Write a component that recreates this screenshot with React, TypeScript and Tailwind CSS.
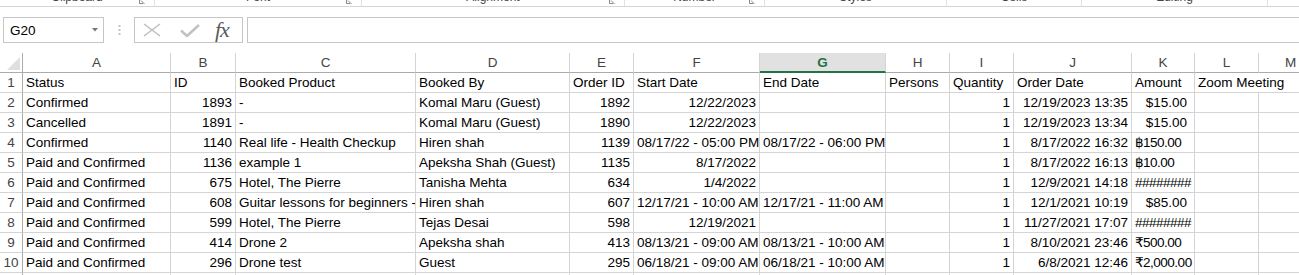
import React from "react";

type Cell = { t?: string; r?: boolean; pr?: boolean; tight?: boolean };

const COLS =
  "grid grid-cols-[23px_148px_65px_180px_154px_64px_126px_126px_64px_64px_118px_63px_64px_64px]";

const letters = ["A", "B", "C", "D", "E", "F", "G", "H", "I", "J", "K", "L", "M"];

const header = [
  "Status",
  "ID",
  "Booked Product",
  "Booked By",
  "Order ID",
  "Start Date",
  "End Date",
  "Persons",
  "Quantity",
  "Order Date",
  "Amount",
];

const L = (t: string): Cell => ({ t });
const R = (t: string): Cell => ({ t, r: true });
const E: Cell = {};
const usd = (t: string): Cell => ({ t, r: true, pr: true });
const cur = (t: string): Cell => ({ t, tight: true });
const HASH: Cell = { t: "########", tight: true };

const rows: Cell[][] = [
  [L("Confirmed"), R("1893"), L("-"), L("Komal Maru (Guest)"), R("1892"), R("12/22/2023"), E, E, R("1"), R("12/19/2023 13:35"), usd("$15.00"), E, E],
  [L("Cancelled"), R("1891"), L("-"), L("Komal Maru (Guest)"), R("1890"), R("12/22/2023"), E, E, R("1"), R("12/19/2023 13:34"), usd("$15.00"), E, E],
  [L("Confirmed"), R("1140"), L("Real life - Health Checkup"), L("Hiren shah"), R("1139"), L("08/17/22 - 05:00 PM"), L("08/17/22 - 06:00 PM"), E, R("1"), R("8/17/2022 16:32"), cur("฿150.00"), E, E],
  [L("Paid and Confirmed"), R("1136"), L("example 1"), L("Apeksha Shah (Guest)"), R("1135"), R("8/17/2022"), E, E, R("1"), R("8/17/2022 16:13"), cur("฿10.00"), E, E],
  [L("Paid and Confirmed"), R("675"), L("Hotel, The Pierre"), L("Tanisha Mehta"), R("634"), R("1/4/2022"), E, E, R("1"), R("12/9/2021 14:18"), HASH, E, E],
  [L("Paid and Confirmed"), R("608"), L("Guitar lessons for beginners -"), L("Hiren shah"), R("607"), L("12/17/21 - 10:00 AM"), L("12/17/21 - 11:00 AM"), E, R("1"), R("12/1/2021 10:19"), usd("$85.00"), E, E],
  [L("Paid and Confirmed"), R("599"), L("Hotel, The Pierre"), L("Tejas Desai"), R("598"), R("12/19/2021"), E, E, R("1"), R("11/27/2021 17:07"), HASH, E, E],
  [L("Paid and Confirmed"), R("414"), L("Drone 2"), L("Apeksha shah"), R("413"), L("08/13/21 - 09:00 AM"), L("08/13/21 - 10:00 AM"), E, R("1"), R("8/10/2021 23:46"), cur("₹500.00"), E, E],
  [L("Paid and Confirmed"), R("296"), L("Drone test"), L("Guest"), R("295"), L("06/18/21 - 09:00 AM"), L("06/18/21 - 10:00 AM"), E, R("1"), R("6/8/2021 12:46"), cur("₹2,000.00"), E, E],
  [E, E, E, E, E, E, E, E, E, E, E, E, E],
];

const groups = [
  { name: "Clipboard", w: "w-[155px]", launcher: true },
  { name: "Font", w: "w-[207px]", launcher: true },
  { name: "Alignment", w: "w-[263px]", launcher: true },
  { name: "Number", w: "w-[140px]", launcher: true },
  { name: "Styles", w: "w-[182px]", launcher: false },
  { name: "Cells", w: "w-[135px]", launcher: false },
  { name: "Editing", w: "w-[186px]", launcher: false },
];

function Launcher() {
  return (
    <svg width="7" height="6" viewBox="0 0 7 6" className="shrink-0">
      <path d="M0.5 0 V3.5 H4" stroke="#8a8a8a" fill="none" />
      <path d="M2 0.5 L5.5 4" stroke="#8a8a8a" fill="none" />
    </svg>
  );
}

function RibbonStrip() {
  return (
    <div className="flex h-[7px] border-b border-[#d5d5d5] overflow-hidden">
      {groups.map((g) => (
        <div
          key={g.name}
          className={`${g.w} shrink-0 flex border-r border-[#e1e1e1] h-[6px]`}
        >
          <div
            className={`flex-1 flex justify-center ${g.launcher ? "pl-[20px]" : ""}`}
          >
            <span className="mt-[-9px] text-[12px] leading-[12px] text-[#444]">
              {g.name}
            </span>
          </div>
          {g.launcher && (
            <div className="w-[20px] flex justify-end pr-[8px] items-start">
              <Launcher />
            </div>
          )}
        </div>
      ))}
      <div className="flex-1" />
    </div>
  );
}

function FormulaBar() {
  return (
    <div className="flex items-center h-[26px] mt-[10px]">
      <div className="ml-[3px] w-[101px] h-[26px] border border-[#c6c6c6] flex items-center justify-between pl-[6px] pr-[5px] text-[13.5px] text-black">
        <span className="leading-[19px]">G20</span>
        <svg width="6" height="4" viewBox="0 0 6 4">
          <path d="M0 0 H6 L3 3.5 Z" fill="#777" />
        </svg>
      </div>
      <div className="w-[30px] flex justify-center">
        <svg width="3" height="10" viewBox="0 0 3 10">
          <rect x="0.5" y="0" width="2" height="2" fill="#c4c4c4" />
          <rect x="0.5" y="4" width="2" height="2" fill="#c4c4c4" />
          <rect x="0.5" y="8" width="2" height="2" fill="#c4c4c4" />
        </svg>
      </div>
      <div className="w-[109px] h-[26px] border border-[#c6c6c6] flex items-center">
        <svg width="18" height="14" viewBox="0 0 18 14" className="ml-[8px]">
          <path d="M1 1 L17 13 M17 1 L1 13" stroke="#bcbcbc" strokeWidth="1.4" fill="none" />
        </svg>
        <svg width="20" height="13" viewBox="0 0 20 13" className="ml-[19px]">
          <path d="M1 6.5 L7 12 L19 1" stroke="#c2c2c2" strokeWidth="2.6" fill="none" />
        </svg>
        <span className="ml-[15px] font-['Liberation_Serif',serif] italic text-[22px] leading-[22px] text-[#5a5a5a] tracking-[-1px]">
          fx
        </span>
      </div>
      <div className="ml-[4px] flex-1 h-[26px] border border-r-0 border-[#c6c6c6]" />
    </div>
  );
}

function ColumnHeader() {
  return (
    <div className={COLS}>
      <div className="h-5 border-r border-b border-[#ababab] flex items-end justify-end pr-[2px] pb-[2px]">
        <svg width="13" height="13" viewBox="0 0 13 13">
          <path d="M13 0 V13 H0 Z" fill="#dfdfdf" />
        </svg>
      </div>
      {letters.map((l) =>
        l === "G" ? (
          <div
            key={l}
            className="h-5 bg-[#e1e1e1] border-r border-[#d4d4d4] border-b-2 border-b-[#217346] text-center font-bold text-[#217346] leading-[19px]"
          >
            {l}
          </div>
        ) : (
          <div
            key={l}
            className="h-5 border-r border-[#d4d4d4] border-b border-b-[#ababab] text-center text-[#444] leading-[19px]"
          >
            {l}
          </div>
        )
      )}
    </div>
  );
}

function RowNum({ n }: { n: number }) {
  return (
    <div className="h-5 border-r border-r-[#ababab] border-b border-b-[#d4d4d4] text-center text-[#444] leading-[19px]">
      {n}
    </div>
  );
}

function DataCell({ c }: { c: Cell }) {
  return (
    <div
      className={`h-5 border-r border-b border-[#d4d4d4] overflow-hidden whitespace-nowrap leading-[19px] text-black pl-[3px] ${
        c.r ? "text-right" : "text-left"
      } ${c.pr ? "pr-[7px]" : "pr-[3px]"} ${c.tight ? "tracking-[-0.5px] pl-[2px]" : ""}`}
    >
      {c.t}
    </div>
  );
}

export default function App() {
  return (
    <div className="w-[1299px] h-[275px] overflow-hidden bg-white font-['Liberation_Sans','DejaVu_Sans',sans-serif] text-[13.5px]">
      <RibbonStrip />
      <FormulaBar />
      <div className="mt-[10px] w-[1299px] overflow-hidden">
        <div className="w-[1323px]">
          <ColumnHeader />
          <div className={COLS}>
            <RowNum n={1} />
            {header.map((h) => (
              <DataCell key={h} c={L(h)} />
            ))}
            <div className="col-span-2 h-5 border-r border-b border-[#d4d4d4] whitespace-nowrap leading-[19px] pl-[3px] text-black">
              Zoom Meeting
            </div>
          </div>
          {rows.map((r, i) => (
            <div key={i} className={COLS}>
              <RowNum n={i + 2} />
              {r.map((c, j) => (
                <DataCell key={j} c={c} />
              ))}
            </div>
          ))}
        </div>
      </div>
    </div>
  );
}
